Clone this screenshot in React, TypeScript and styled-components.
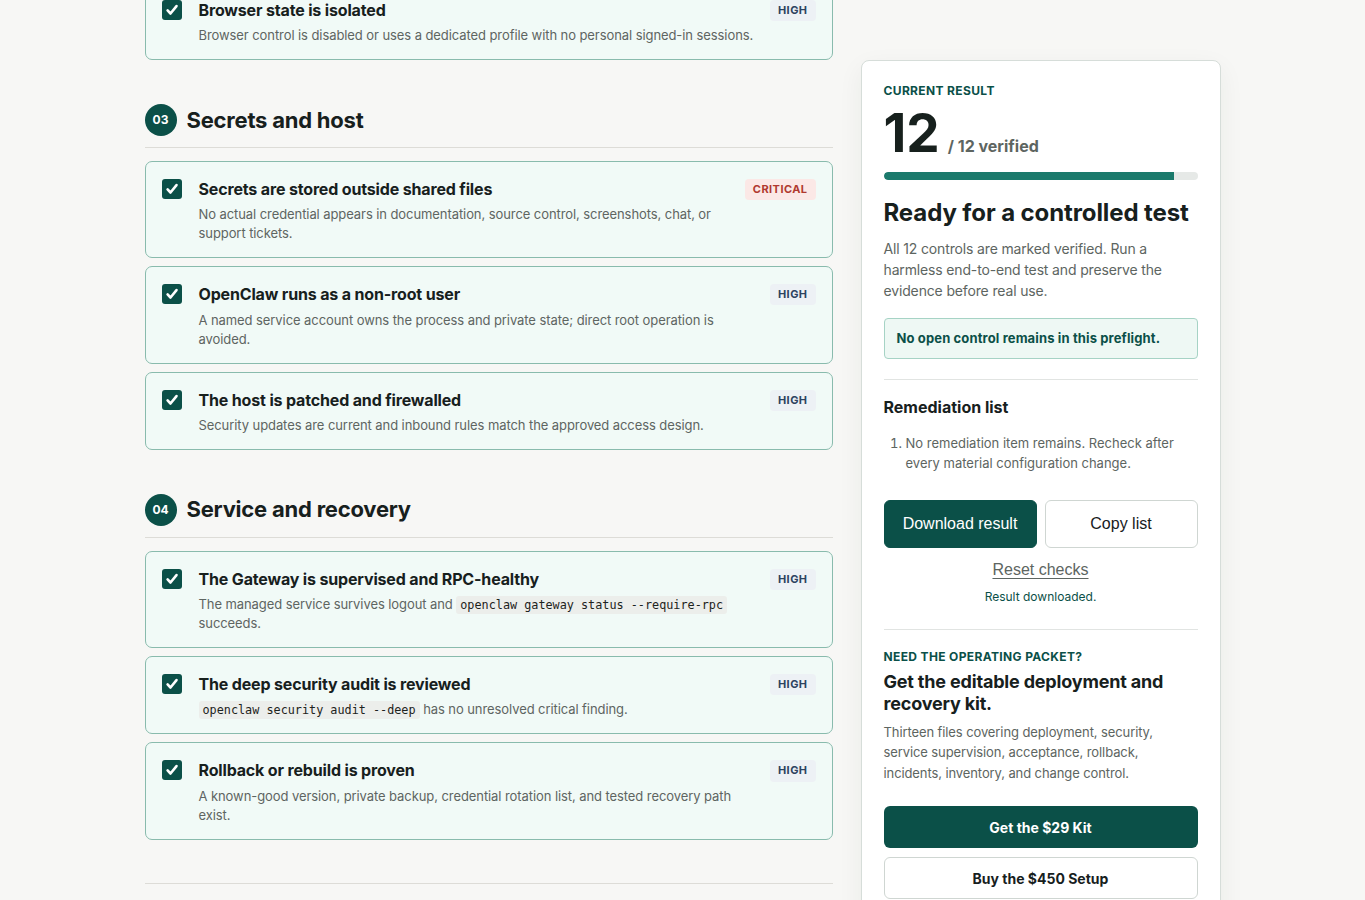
import React from "react";
import styled, { createGlobalStyle, css } from "styled-components";

const GlobalStyle = createGlobalStyle`
  * { box-sizing: border-box; }
  body {
    margin: 0;
    background: #f7f7f5;
    font-family: Inter, "Noto Sans", sans-serif;
    color: #17201d;
  }
`;

const GREEN = "#0b5048";

type Level = "high" | "critical";

interface Check {
  title: string;
  body: React.ReactNode;
  level: Level;
}

const Page = styled.div`
  display: grid;
  grid-template-columns: 688px 360px;
  gap: 28px;
  width: 1076px;
  margin: -18px auto 0;
  align-items: start;
`;

const Main = styled.main`
  display: flex;
  flex-direction: column;
`;

const Section = styled.section`
  display: flex;
  flex-direction: column;
  margin-top: 43.5px;
`;

const SectionHead = styled.header`
  display: flex;
  align-items: center;
  gap: 10px;
  padding-bottom: 11px;
  border-bottom: 1px solid #dddcd7;
  margin-bottom: 13px;
`;

const Step = styled.span`
  width: 32px;
  height: 32px;
  border-radius: 50%;
  background: ${GREEN};
  color: #fff;
  font-size: 12px;
  font-weight: 700;
  display: flex;
  align-items: center;
  justify-content: center;
`;

const SectionTitle = styled.h2`
  margin: 0;
  font-size: 22px;
  font-weight: 700;
  letter-spacing: -0.01em;
  line-height: 1.3;
`;

const CardList = styled.div`
  display: flex;
  flex-direction: column;
  gap: 8px;
`;

const Card = styled.label`
  display: flex;
  align-items: flex-start;
  gap: 17px;
  padding: 16px 16px 14px;
  border: 1px solid #89bbad;
  border-radius: 7px;
  background: #f1faf7;
`;

const Box = styled.span`
  flex: none;
  width: 20px;
  height: 20px;
  margin-top: 1px;
  display: flex;
`;

const CardBody = styled.div`
  flex: 1;
  min-width: 0;
`;

const CardTitle = styled.div`
  font-size: 16px;
  font-weight: 700;
  letter-spacing: -0.01em;
  line-height: 1.4;
  margin-bottom: 5px;
  color: #17201d;
`;

const CardText = styled.div`
  font-size: 13px;
  line-height: 19px;
  letter-spacing: -0.08px;
  color: #5e6562;
`;

const Code = styled.code`
  font-family: "DejaVu Sans Mono", "Liberation Mono", monospace;
  font-size: 11.8px;
  line-height: 1;
  letter-spacing: 0;
  color: #1d2320;
  background: #eceeeb;
  border-radius: 3px;
  padding: 2px 4px;
`;

const Badge = styled.span<{ $level: Level }>`
  flex: none;
  margin: 1px 0 0 -8px;
  padding: 4px 8px;
  border-radius: 4px;
  font-size: 11px;
  line-height: 1.2;
  font-weight: 700;
  letter-spacing: 0.04em;
  text-transform: uppercase;
  ${({ $level }) =>
    $level === "critical"
      ? css`
          background: #fbe8e6;
          color: #b0392f;
        `
      : css`
          background: #edf1f5;
          color: #2d4360;
        `}
`;

const EndRule = styled.hr`
  margin: 43px 0 0;
  border: 0;
  border-top: 1px solid #dddcd7;
`;

/* sidebar */

const Aside = styled.aside`
  margin-top: 77.5px;
  background: #fff;
  border: 1px solid #d6ddd9;
  border-radius: 8px;
  padding: 22px;
  box-shadow: 0 8px 26px rgba(20, 45, 35, 0.06);
`;

const Eyebrow = styled.div`
  font-size: 12px;
  line-height: 15px;
  font-weight: 700;
  letter-spacing: 0.03em;
  text-transform: uppercase;
  color: ${GREEN};
`;

const ScoreRow = styled.div`
  display: flex;
  align-items: baseline;
  gap: 8px;
  margin-top: 9px;
  line-height: 1;
`;

const Score = styled.span`
  font-size: 53px;
  font-weight: 700;
  color: #17201d;
`;

const ScoreOf = styled.span`
  font-size: 16px;
  font-weight: 700;
  color: #5d6561;
`;

const Track = styled.div`
  margin-top: 12px;
  height: 8px;
  border-radius: 4px;
  background: #e6e9e7;
  overflow: hidden;
`;

const Fill = styled.div`
  height: 100%;
  background: #1b7a6c;
  border-radius: 4px 0 0 4px;
`;

const Verdict = styled.h3`
  margin: 18px 0 0;
  font-size: 24px;
  line-height: 1.25;
  font-weight: 700;
  letter-spacing: -0.1px;
`;

const Lead = styled.p`
  margin: 10px 0 0;
  font-size: 14px;
  line-height: 21px;
  letter-spacing: -0.15px;
  color: #5d6561;
`;

const Callout = styled.div`
  margin-top: 17px;
  padding: 11px 12px;
  border: 1px solid #a6d3c5;
  border-radius: 4px;
  background: #eef8f4;
  font-size: 13px;
  line-height: 17px;
  font-weight: 700;
  letter-spacing: 0.01em;
  color: ${GREEN};
`;

const Block = styled.div<{ $top: number; $pad: number }>`
  margin-top: ${({ $top }) => $top}px;
  padding-top: ${({ $pad }) => $pad}px;
  border-top: 1px solid #e1e4e2;
`;

const BlockTitle = styled.h4`
  margin: 0;
  font-size: 16px;
  line-height: 1.4;
  font-weight: 700;
`;

const Steps = styled.ol`
  margin: 15px 0 0;
  padding-left: 22px;
  font-size: 13px;
  line-height: 20px;
  color: #5d6561;
`;

const Actions = styled.div`
  display: grid;
  grid-template-columns: 1fr 1fr;
  gap: 8px;
  margin-top: 27px;
`;

const Btn = styled.button<{ $primary?: boolean }>`
  height: 48px;
  border-radius: 6px;
  font-family: "Liberation Sans", Arial, sans-serif;
  font-size: 16px;
  cursor: pointer;
  ${({ $primary }) =>
    $primary
      ? css`
          background: ${GREEN};
          color: #fff;
          border: 1px solid ${GREEN};
        `
      : css`
          background: #fff;
          color: #17201d;
          border: 1px solid #cfd6d2;
        `}
`;

const Reset = styled.button`
  display: block;
  margin: 11px auto 0;
  padding: 0;
  border: 0;
  background: none;
  font-family: "Liberation Sans", Arial, sans-serif;
  font-size: 16px;
  line-height: 22px;
  color: #5d6561;
  text-decoration: underline;
  text-underline-offset: 3px;
  cursor: pointer;
`;

const Status = styled.div`
  margin-top: 7px;
  text-align: center;
  font-size: 12px;
  line-height: 17px;
  color: ${GREEN};
`;

const Pitch = styled.h4`
  margin: 7px 0 0;
  font-size: 18px;
  line-height: 22px;
  font-weight: 700;
  letter-spacing: -0.01em;
`;

const PitchText = styled.p`
  margin: 7px 0 0;
  font-size: 13px;
  line-height: 20.4px;
  letter-spacing: -0.1px;
  color: #5d6561;
`;

const Cta = styled.a<{ $primary?: boolean }>`
  display: flex;
  align-items: center;
  justify-content: center;
  height: 42px;
  border-radius: 6px;
  font-size: 14px;
  font-weight: 700;
  text-decoration: none;
  ${({ $primary }) =>
    $primary
      ? css`
          margin-top: 23px;
          background: ${GREEN};
          color: #fff;
        `
      : css`
          margin-top: 9px;
          background: #fff;
          color: #17201d;
          border: 1px solid #cfd6d2;
        `}
`;

const CheckIcon = () => (
  <svg width="20" height="20" viewBox="0 0 20 20">
    <rect width="20" height="20" rx="3" fill={GREEN} />
    <path
      d="M5.6 10.4l2.9 3.1 6-7.4"
      stroke="#fff"
      strokeWidth="2.6"
      fill="none"
      strokeLinecap="round"
      strokeLinejoin="round"
    />
  </svg>
);

const CheckCard = ({ title, body, level }: Check) => (
  <Card>
    <Box>
      <CheckIcon />
    </Box>
    <CardBody>
      <CardTitle>{title}</CardTitle>
      <CardText>{body}</CardText>
    </CardBody>
    <Badge $level={level}>{level}</Badge>
  </Card>
);

const tail: Check[] = [
  {
    title: "Browser state is isolated",
    body: "Browser control is disabled or uses a dedicated profile with no personal signed-in sessions.",
    level: "high",
  },
];

const sections: { step: string; title: string; checks: Check[] }[] = [
  {
    step: "03",
    title: "Secrets and host",
    checks: [
      {
        title: "Secrets are stored outside shared files",
        body: "No actual credential appears in documentation, source control, screenshots, chat, or support tickets.",
        level: "critical",
      },
      {
        title: "OpenClaw runs as a non-root user",
        body: "A named service account owns the process and private state; direct root operation is avoided.",
        level: "high",
      },
      {
        title: "The host is patched and firewalled",
        body: "Security updates are current and inbound rules match the approved access design.",
        level: "high",
      },
    ],
  },
  {
    step: "04",
    title: "Service and recovery",
    checks: [
      {
        title: "The Gateway is supervised and RPC-healthy",
        body: (
          <>
            The managed service survives logout and{" "}
            <Code>openclaw gateway status --require-rpc</Code> succeeds.
          </>
        ),
        level: "high",
      },
      {
        title: "The deep security audit is reviewed",
        body: (
          <>
            <Code>openclaw security audit --deep</Code> has no unresolved critical finding.
          </>
        ),
        level: "high",
      },
      {
        title: "Rollback or rebuild is proven",
        body: "A known-good version, private backup, credential rotation list, and tested recovery path exist.",
        level: "high",
      },
    ],
  },
];

export default function App() {
  const verified = 12;
  const barWidth = 92.4; // bar as drawn by the page

  return (
    <>
      <GlobalStyle />
      <Page>
        <Main>
          <CardList>
            {tail.map((c) => (
              <CheckCard key={c.title} {...c} />
            ))}
          </CardList>
          {sections.map((s) => (
            <Section key={s.step}>
              <SectionHead>
                <Step>{s.step}</Step>
                <SectionTitle>{s.title}</SectionTitle>
              </SectionHead>
              <CardList>
                {s.checks.map((c) => (
                  <CheckCard key={c.title} {...c} />
                ))}
              </CardList>
            </Section>
          ))}
          <EndRule />
        </Main>

        <Aside>
          <Eyebrow>Current result</Eyebrow>
          <ScoreRow>
            <Score>{verified}</Score>
            <ScoreOf>/ 12 verified</ScoreOf>
          </ScoreRow>
          <Track>
            <Fill style={{ width: `${barWidth}%` }} />
          </Track>
          <Verdict>Ready for a controlled test</Verdict>
          <Lead>
            All 12 controls are marked verified. Run a harmless end-to-end test and
            preserve the evidence before real use.
          </Lead>
          <Callout>No open control remains in this preflight.</Callout>

          <Block $top={20} $pad={16}>
            <BlockTitle>Remediation list</BlockTitle>
            <Steps>
              <li>
                No remediation item remains. Recheck after every material configuration
                change.
              </li>
            </Steps>
            <Actions>
              <Btn $primary>Download result</Btn>
              <Btn>Copy list</Btn>
            </Actions>
            <Reset>Reset checks</Reset>
            <Status>Result downloaded.</Status>
          </Block>

          <Block $top={24} $pad={19}>
            <Eyebrow>Need the operating packet?</Eyebrow>
            <Pitch>Get the editable deployment and recovery kit.</Pitch>
            <PitchText>
              Thirteen files covering deployment, security, service supervision,
              acceptance, rollback, incidents, inventory, and change control.
            </PitchText>
            <Cta $primary href="#kit">
              Get the $29 Kit
            </Cta>
            <Cta href="#setup">Buy the $450 Setup</Cta>
          </Block>
        </Aside>
      </Page>
    </>
  );
}
